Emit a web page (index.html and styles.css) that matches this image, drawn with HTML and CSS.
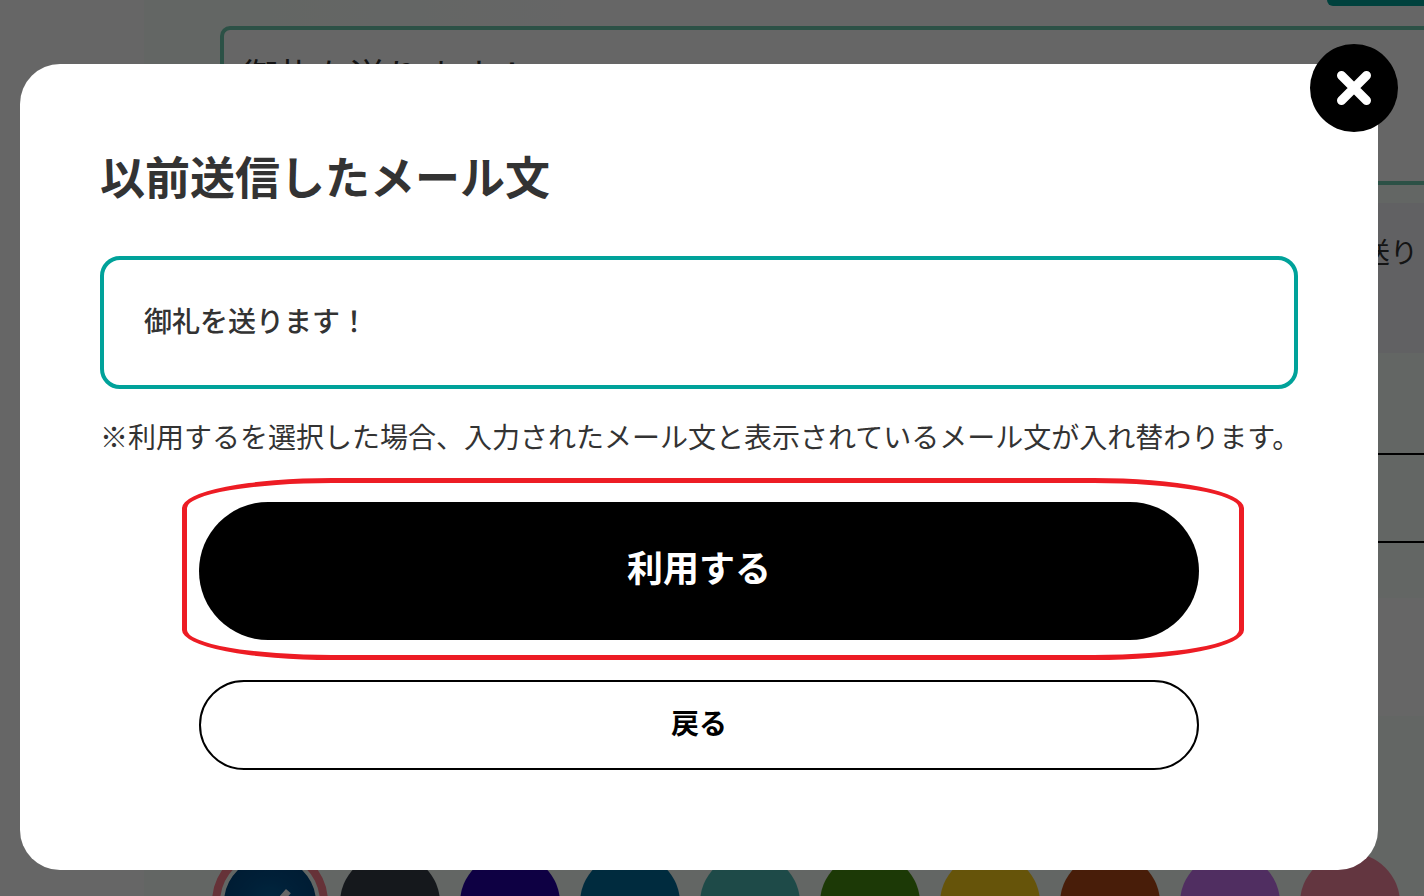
FILE: index.html
```html
<!DOCTYPE html>
<html lang="ja">
<head>
    <meta charset="UTF-8">
    <meta name="viewport" content="width=device-width, initial-scale=1.0">
    <title>以前送信したメール文</title>
    <link rel="stylesheet" href="styles.css">
</head>
<body>
    <main class="page">
        <section class="panel">
            <div class="toolbar">
                <button type="button" class="toolbar-button" aria-label="メール文"></button>
            </div>
            <textarea class="message-input" aria-label="メール本文">御礼を送ります！</textarea>
            <div class="notice">
                <p>送り</p>
            </div>
            <button type="button" class="history-button" aria-label="履歴"></button>
        </section>
        <section class="palette">
            <button type="button" class="swatch swatch-navy selected" aria-label="ネイビー">
                <svg class="check" viewBox="0 0 100 100" aria-hidden="true">
                    <path d="M30 54 L44 67 L70 37" fill="none" stroke="#fff" stroke-width="7"/>
                </svg>
            </button>
            <button type="button" class="swatch swatch-black" aria-label="ブラック"></button>
            <button type="button" class="swatch swatch-indigo" aria-label="インディゴ"></button>
            <button type="button" class="swatch swatch-blue" aria-label="ブルー"></button>
            <button type="button" class="swatch swatch-teal" aria-label="ティール"></button>
            <button type="button" class="swatch swatch-green" aria-label="グリーン"></button>
            <button type="button" class="swatch swatch-yellow" aria-label="イエロー"></button>
            <button type="button" class="swatch swatch-brown" aria-label="ブラウン"></button>
            <button type="button" class="swatch swatch-purple" aria-label="パープル"></button>
            <button type="button" class="swatch swatch-pink" aria-label="ピンク"></button>
        </section>
    </main>

    <div class="overlay">
        <div class="modal" role="dialog" aria-modal="true" aria-labelledby="modalTitle">
            <button type="button" class="close-button" aria-label="閉じる">
                <svg viewBox="0 0 88 88" aria-hidden="true">
                    <path d="M31.5 31.5 L56.5 56.5 M56.5 31.5 L31.5 56.5" fill="none" stroke="#fff" stroke-width="9" stroke-linecap="round"/>
                </svg>
            </button>
            <h1 id="modalTitle">以前送信したメール文</h1>
            <div class="mail-text">御礼を送ります！</div>
            <p class="note">※利用するを選択した場合、入力されたメール文と表示されているメール文が入れ替わります。</p>
            <div class="actions">
                <div class="highlight">
                    <button type="button" class="use-button">利用する</button>
                </div>
                <button type="button" class="back-button">戻る</button>
            </div>
        </div>
    </div>
</body>
</html>
```

FILE: styles.css
```css
* {
    box-sizing: border-box;
}
body {
    margin: 0;
    font-family: "Noto Sans CJK JP", sans-serif;
    color: #333;
    background: #fff;
}
button {
    font-family: inherit;
    padding: 0;
    border: none;
    cursor: pointer;
}

/* page behind the modal */
.page {
    height: 100vh;
    margin-left: 144px;
    overflow: hidden;
}
.panel {
    height: 598px;
    padding-left: 76px;
    background: #f7fffa;
}
.toolbar {
    display: flex;
    justify-content: flex-end;
    height: 26px;
    background: linear-gradient(90deg, #f7fffa, #fff 400px);
}
.toolbar-button {
    width: 97px;
    height: 6px;
    border-radius: 0 0 0 10px;
    background: #00a29a;
}
.message-input {
    display: block;
    width: 100%;
    height: 159px;
    padding: 19px 18px;
    border: 4px solid #6fcab0;
    border-right: none;
    border-radius: 10px 0 0 10px;
    font-family: inherit;
    font-size: 36px;
    line-height: 50px;
    color: #333;
    background: #fff;
    resize: none;
}
.notice {
    margin-top: 18px;
    padding: 30px 6px;
    height: 150px;
    text-align: right;
    background: #f3f3f8;
}
.notice p {
    margin: 0;
    font-size: 28px;
    line-height: 36px;
}
.history-button {
    display: block;
    width: 100%;
    height: 90px;
    margin-top: 100px;
    border: 2px solid #000;
    border-right: none;
    background: none;
}
.palette {
    display: flex;
    gap: 20px;
    margin-top: 118px;
    padding: 137px 0 0 76px;
    height: 300px;
    background: #f7fffa;
}
.swatch {
    flex: none;
    width: 100px;
    height: 100px;
    border-radius: 50%;
}
.selected {
    border: 4px solid #f7fffa;
    outline: 8px solid #ff7d8c;
}
.check {
    display: block;
}
.swatch-navy { background: radial-gradient(circle, #00619f, #00508c 40%, #004077); }
.swatch-black { background: #353c46; }
.swatch-indigo { background: #2400a8; }
.swatch-blue { background: #006c9c; }
.swatch-teal { background: #4dbab5; }
.swatch-green { background: #48900f; }
.swatch-yellow { background: #ffd119; }
.swatch-brown { background: #b44a18; }
.swatch-purple { background: #c873f2; }
.swatch-pink { background: #f888a0; }

/* modal */
.overlay {
    position: fixed;
    inset: 0;
    padding: 64px 46px 26px 20px;
    background: rgba(0, 0, 0, 0.6);
}
.modal {
    position: relative;
    padding: 80px 80px 100px;
    border-radius: 40px;
    background: #fff;
}
.close-button {
    position: absolute;
    top: -20px;
    right: -20px;
    width: 88px;
    height: 88px;
    border-radius: 50%;
    background: #000;
}
.close-button svg {
    display: block;
}
h1 {
    margin: 0;
    font-size: 45px;
    font-weight: bold;
    line-height: 64px;
}
.mail-text {
    margin-top: 48px;
    padding: 38px 40px 42px;
    border: 4px solid #00a29a;
    border-radius: 20px;
    font-size: 28px;
    font-weight: 500;
    line-height: 45px;
}
.note {
    margin: 26px 0 0;
    font-size: 28px;
    line-height: 42px;
    white-space: nowrap;
}
.actions {
    display: flex;
    flex-direction: column;
    gap: 40px;
    max-width: 1000px;
    margin: 45px auto 0;
}
.highlight {
    position: relative;
}
.highlight::after {
    content: "";
    position: absolute;
    inset: -24px -45px -20px -17px;
    border: 5px solid #ed1c24;
    border-radius: 150px / 30px;
    pointer-events: none;
}
.use-button {
    display: block;
    width: 100%;
    height: 138px;
    padding-bottom: 10px;
    border-radius: 69px;
    font-size: 36px;
    font-weight: bold;
    color: #fff;
    background: #000;
}
.back-button {
    height: 90px;
    padding-bottom: 6px;
    border: 2px solid #000;
    border-radius: 45px;
    font-size: 28px;
    font-weight: bold;
    color: #000;
    background: #fff;
}
```
